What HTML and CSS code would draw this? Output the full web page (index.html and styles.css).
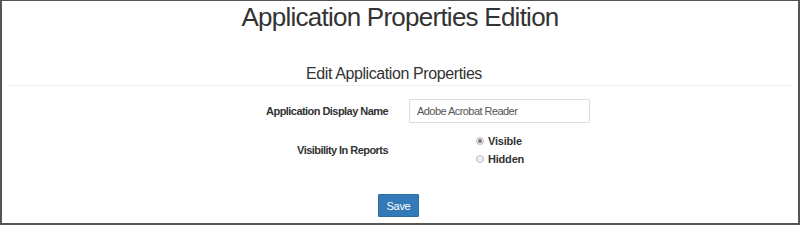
FILE: index.html
```html
<!DOCTYPE html>
<html>
<head>
<meta charset="utf-8">
<link rel="stylesheet" href="styles.css">
</head>
<body>
<div class="frame">
  <h1 class="title">Application Properties Edition</h1>
  <h2 class="subtitle">Edit Application Properties</h2>
  <hr class="rule">
  <form class="form">
    <div class="row">
      <label class="label">Application Display Name</label>
      <input class="input" type="text" value="Adobe Acrobat Reader">
    </div>
    <div class="row row-radio">
      <span class="label">Visibility In Reports</span>
      <div class="radios">
        <label class="radio"><span class="dot checked"></span>Visible</label>
        <label class="radio"><span class="dot"></span>Hidden</label>
      </div>
    </div>
    <div class="actions">
      <button class="btn" type="button">Save</button>
    </div>
  </form>
</div>
</body>
</html>
```
FILE: styles.css
```css
html, body {
  margin: 0;
  padding: 0;
  background: #fff;
}
body {
  font-family: "Liberation Sans", Arial, sans-serif;
  color: #333;
}
.frame {
  box-sizing: border-box;
  width: 800px;
  height: 225px;
  border-style: solid;
  border-color: #555;
  border-width: 1px 2px 2px 2px;
  padding-top: 1px;
  overflow: hidden;
}
.title {
  margin: 0;
  font-size: 26px;
  font-weight: normal;
  line-height: 30px;
  letter-spacing: -0.75px;
  text-align: center;
  color: #333;
}
.subtitle {
  margin: 32px 0 0 0;
  font-size: 16px;
  font-weight: normal;
  line-height: 20px;
  letter-spacing: -0.4px;
  text-align: center;
  padding-right: 12px;
}
.rule {
  margin: 1px 6px 0 6px;
  border: 0;
  border-top: 1px solid #eee;
  height: 0;
}
.form {
  margin-top: 13px;
}
.row {
  display: flex;
  align-items: center;
}
.label {
  width: 386px;
  text-align: right;
  font-size: 11px;
  font-weight: bold;
  letter-spacing: -0.55px;
  color: #333;
  flex: none;
}
.input {
  box-sizing: border-box;
  margin-left: 21px;
  width: 181px;
  height: 24px;
  border: 1px solid #ddd;
  border-radius: 1px;
  padding: 0 7px;
  font-family: "Liberation Sans", Arial, sans-serif;
  font-size: 11px;
  letter-spacing: -0.55px;
  color: #555;
  outline: none;
}
.row-radio {
  margin-top: 11px;
  align-items: center;
}
.radios {
  margin-left: 88px;
  display: flex;
  flex-direction: column;
  gap: 4px;
}
.radio {
  display: flex;
  align-items: center;
  font-size: 11px;
  font-weight: bold;
  line-height: 14px;
  letter-spacing: -0.2px;
  color: #333;
}
.dot {
  box-sizing: border-box;
  width: 8px;
  height: 8px;
  border-radius: 50%;
  border: 1px solid #bbb;
  background: #eee;
  margin-right: 4px;
  position: relative;
}
.dot.checked::after {
  content: "";
  position: absolute;
  left: 1px;
  top: 1px;
  width: 4px;
  height: 4px;
  border-radius: 50%;
  background: #777;
}
.actions {
  margin-top: 28px;
  display: flex;
  padding-left: 376px;
}
.btn {
  width: 41px;
  height: 23px;
  border: 1px solid #2e6da4;
  background: #337ab7;
  color: #fff;
  font-family: "Liberation Sans", Arial, sans-serif;
  font-size: 11px;
  letter-spacing: -0.3px;
  padding: 0;
  border-radius: 1px;
}
```
